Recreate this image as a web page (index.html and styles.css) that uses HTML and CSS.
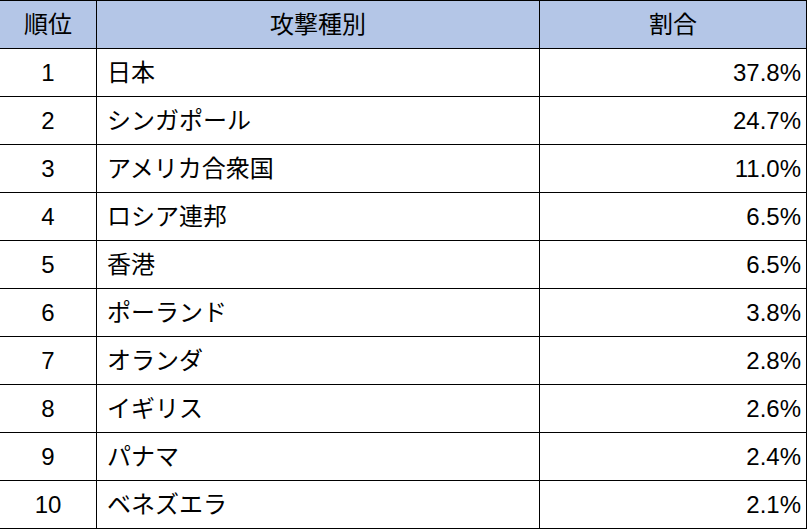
FILE: index.html
```html
<!DOCTYPE html>
<html lang="ja">
<head>
<meta charset="utf-8">
<link rel="stylesheet" href="styles.css">
</head>
<body>
<div class="grid">
  <div class="cell head c1">順位</div>
  <div class="cell head c2h">攻撃種別</div>
  <div class="cell head c3h">割合</div>

  <div class="cell c1">1</div><div class="cell c2">日本</div><div class="cell c3">37.8%</div>
  <div class="cell c1">2</div><div class="cell c2">シンガポール</div><div class="cell c3">24.7%</div>
  <div class="cell c1">3</div><div class="cell c2">アメリカ合衆国</div><div class="cell c3">11.0%</div>
  <div class="cell c1">4</div><div class="cell c2">ロシア連邦</div><div class="cell c3">6.5%</div>
  <div class="cell c1">5</div><div class="cell c2">香港</div><div class="cell c3">6.5%</div>
  <div class="cell c1">6</div><div class="cell c2">ポーランド</div><div class="cell c3">3.8%</div>
  <div class="cell c1">7</div><div class="cell c2">オランダ</div><div class="cell c3">2.8%</div>
  <div class="cell c1">8</div><div class="cell c2">イギリス</div><div class="cell c3">2.6%</div>
  <div class="cell c1">9</div><div class="cell c2">パナマ</div><div class="cell c3">2.4%</div>
  <div class="cell c1">10</div><div class="cell c2">ベネズエラ</div><div class="cell c3">2.1%</div>
</div>
</body>
</html>
```
FILE: styles.css
```css
html, body {
  margin: 0;
  padding: 0;
  background: #ffffff;
}
body {
  font-family: "Liberation Sans", "Noto Sans CJK JP", sans-serif;
  font-size: 24px;
  color: #000;
}
.grid {
  display: grid;
  grid-template-columns: 97px 443px 267px;
  grid-auto-rows: 48px;
  width: 807px;
  border-top: 1px solid #000;
}
.cell {
  box-sizing: border-box;
  border-right: 1px solid #000;
  border-bottom: 1px solid #000;
  display: flex;
  align-items: center;
  background: #fff;
  line-height: 1;
  white-space: nowrap;
}
.head {
  background: #b4c6e7;
}
.c1 {
  justify-content: center;
}
.c2h, .c3h {
  justify-content: center;
}
.c2 {
  justify-content: flex-start;
  padding-left: 10px;
}
.c3 {
  justify-content: flex-end;
  padding-right: 5px;
}
```
